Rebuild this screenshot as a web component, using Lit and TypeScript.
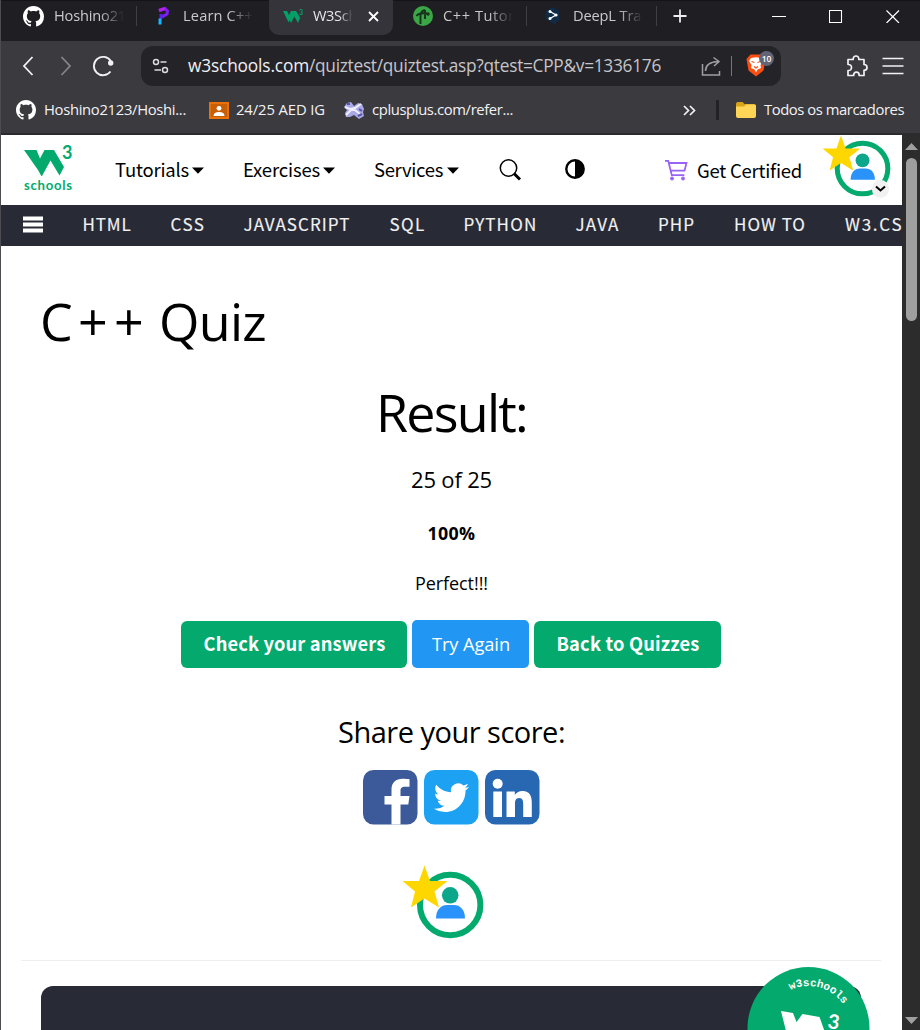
import { LitElement, html, css } from "lit";
import { customElement, property } from "lit/decorators.js";

/** A single line of text tracked so that it fills exactly `w` pixels. */
@customElement("fit-text")
class FitText extends LitElement {
  @property({ type: Number }) w = 0;
  @property() text = "";
  static styles = css`
    :host { display: inline-block; white-space: pre; flex: none; text-align: left; }
    .inner { display: inline-block; }
  `;
  firstUpdated() {
    const el = this.renderRoot.querySelector(".inner") as HTMLElement;
    const natural = el.getBoundingClientRect().width;
    const base = parseFloat(getComputedStyle(el).letterSpacing) || 0;
    el.style.letterSpacing = `${base + (this.w - natural) / Math.max(1, this.text.length)}px`;
    this.style.width = `${this.w}px`;
  }
  render() {
    return html`<span class="inner">${this.text}</span>`;
  }
}

const github = (s: number) => html`<svg width=${s} height=${s} viewBox="0 0 16 16" fill="#fff"><path d="M8 0C3.58 0 0 3.58 0 8c0 3.54 2.29 6.53 5.47 7.59.4.07.55-.17.55-.38 0-.19-.01-.82-.01-1.49-2.01.37-2.53-.49-2.69-.94-.09-.23-.48-.94-.82-1.13-.28-.15-.68-.52-.01-.53.63-.01 1.08.58 1.23.82.72 1.21 1.87.87 2.33.66.07-.52.28-.87.51-1.07-1.78-.2-3.64-.89-3.64-3.95 0-.87.31-1.59.82-2.15-.08-.2-.36-1.02.08-2.12 0 0 .67-.21 2.2.82.64-.18 1.32-.27 2-.27s1.36.09 2 .27c1.53-1.04 2.2-.82 2.2-.82.44 1.1.16 1.92.08 2.12.51.56.82 1.27.82 2.15 0 3.07-1.87 3.75-3.65 3.95.29.25.54.73.54 1.48 0 1.07-.01 1.93-.01 2.2 0 .21.15.46.55.38A8.01 8.01 0 0 0 16 8c0-4.42-3.58-8-8-8z"/></svg>`;

const programiz = html`<svg width="20" height="20" viewBox="0 0 20 20" fill="none" stroke-width="3"><path d="M6 4.5l6-2 2.500 2.500-.5 3-5 3" stroke="#7a1df2"/><path d="M6 4.500l6-2" stroke="#b620e8"/><path d="M8 8v5" stroke="#5a24e8"/><path d="M7 18.500v-6" stroke="#19b5fe"/></svg>`;

const w3fav = html`<svg width="21" height="20" viewBox="0 0 21 20"><path d="M0 5h4l2 4 2-4h5l4.200 6.800-2.200 5.200-3.600-6.500L8 17l-1.500-3-.8 2.500z" fill="#04a067"/><text x="16" y="8.500" font-size="7" font-family="Lato" font-weight="700" fill="#04a067">3</text></svg>`;

const tutorial = html`<svg width="20" height="20" viewBox="0 0 20 20"><circle cx="10" cy="10" r="10" fill="#3aa646"/><path d="M7.500 18V9Q8 5 12 4M3.500 10Q6 6.500 14 7.500M12 4v9" fill="none" stroke="#17331b" stroke-width="1.900"/><circle cx="15" cy="8" r="1.700" fill="#17331b"/></svg>`;

const deepl = html`<svg width="20" height="20" viewBox="0 0 20 20"><path d="M9.500 1l7 4v9l-3.500 2v3l-3.500-2-6.800-4V5z" fill="#0f2b46"/><path d="M7 5.500l6 3.500-6 3.500" stroke="#fff" stroke-width="1.300" fill="none"/><g fill="#fff"><circle cx="7" cy="5.600" r="1.500"/><circle cx="13" cy="9" r="1.600"/><circle cx="7" cy="12.500" r="1.500"/></g></svg>`;

const userBadge = (w: number, h: number) => html`<svg width=${w} height=${h} viewBox="-1 0 82 74">
  <circle cx="47.200" cy="40" r="30.200" fill="none" stroke="#04aa6d" stroke-width="6"/>
  <circle cx="47.200" cy="30.300" r="8.300" fill="#0da68a"/>
  <path d="M33 53.500c0-9 5-13.500 11-13.500h7c6 0 11 4.500 11 13.500z" fill="#2a93fb"/>
  <path d="M21.500.500l5.500 15.500h17.500l-13 10.500 4.500 16-14.500-9-13.500 9 4-16L-.5 16H16z" fill="#ffd700"/>
</svg>`;

const caret = html`<svg class="caret" width="12" height="7" viewBox="0 0 12 7"><path d="M0 .5h12L6 6.800z" fill="#000"/></svg>`;

@customElement("app-root")
class AppRoot extends LitElement {
  static styles = css`
    * { box-sizing: border-box; }
    :host { display: block; width: 920px; height: 1030px; overflow: hidden; background: #fff; font-family: "Open Sans", "Noto Sans", sans-serif; color: #000; }
    svg { display: block; flex: none; }
    .window { height: 1030px; border-left: 1px solid #4d4c50; display: flex; flex-direction: column; }
    .strip { height: 41px; flex: none; background: #1f1e23; display: flex; padding-left: 8px; border-top: 1px solid #141317; }
    .tab { width: 124px; height: 35px; flex: none; margin-top: -1px; padding: 6px 0 0 14px; display: flex; align-items: flex-start; color: #cac9cd; font-size: 14.600px; line-height: 19px; border-radius: 0 0 10px 10px; }
    .tab.active { background: #35343a; color: #e6e6ea; }
    .fade { margin-left: 10px; width: 70px; overflow: hidden; -webkit-mask-image: linear-gradient(90deg, #000 65%, transparent); mask-image: linear-gradient(90deg, #000 65%, transparent); }
    .active .fade { width: 40px; margin-left: 9px; }
    .x { margin: 5px 0 0 15px; }
    .sep { width: 1px; height: 20px; margin: 5px 2px 0 3px; background: #403f45; }
    .sep.none { background: transparent; }
    .plus { margin: 8px 0 0 14px; }
    .wins { display: flex; margin-left: auto; gap: 43px; padding: 8px 20px 0 0; }
    .toolbar { height: 50px; flex: none; background: #3b3a3f; display: flex; align-items: center; padding: 0 14px 0 21px; }
    .toolbar .fwd { margin-left: 26px; }
    .toolbar .reload { margin-left: 20px; }
    .omni { margin-left: 27px; width: 640px; height: 40px; border-radius: 12px; background: #242328; display: flex; align-items: center; padding-left: 11px; }
    .url { font-size: 17.300px; line-height: 30px; margin-left: 18px; color: #c6c5ca; display: flex; }
    .url .host { color: #f0f0f4; }
    .share { margin-left: 40px; }
    .bar { width: 1px; height: 20px; background: #77767b; margin: 0 14px 0 10px; }
    .shield { position: relative; width: 30px; height: 26px; }
    .count { position: absolute; left: 13px; top: -2px; width: 15px; height: 15px; border-radius: 8px; background: #626375; color: #fff; font-size: 8.500px; font-weight: 600; line-height: 15px; text-align: center; }
    .puzzle { margin-left: 65px; }
    .menu { margin-left: 14px; }
    .marks { height: 44px; flex: none; background: #3b3a3f; border-bottom: 2px solid #2b2a2f; display: flex; align-items: center; padding: 0 0 4px 15px; color: #f2f2f5; font-size: 14.800px; line-height: 24px; }
    .marks fit-text { margin-top: -2px; }
    .marks .t { margin-left: 8px; }
    .marks .all { margin-left: 7px; }
    .view { flex: 1; min-height: 0; display: flex; }
    .page { width: 901px; height: 895px; background: #fff; overflow: hidden; position: relative; }
    .nav { height: 70px; display: flex; align-items: center; font: 18.500px/30px "Noto Sans CJK SC", sans-serif; }
    .nav fit-text { margin-top: -2px; }
    .caret { margin-left: 4px; }
    .user { position: relative; margin: -8px 0 0 20px; }
    .dd { position: absolute; left: 50px; top: 45px; }
    .subnav { height: 41px; background: #282a35; display: flex; align-items: center; padding: 0 0 3px 22px; color: #f1f1f1; font: 17px/26px "Noto Sans CJK SC", sans-serif; -webkit-text-stroke: .15px #f1f1f1; white-space: nowrap; }
    .content { display: flex; flex-direction: column; align-items: center; padding: 40px 22px 0 20px; height: 784px; width: 901px; }
    .content > fit-text { padding-left: 1px; }
    .h1 { align-self: flex-start; display: flex; margin-left: 19px; height: 70px; flex: none; font-size: 52px; line-height: 70px; }
    .quiz { margin-left: 9px; }
    .result { margin-top: 18px; height: 76px; line-height: 76px; font-size: 52px; }
    .score { margin-top: 14px; height: 31px; line-height: 31px; font-size: 22px; }
    .pct { margin-top: 23px; height: 30px; line-height: 30px; font-size: 17.800px; font-weight: 700; }
    .perfect { margin-top: 20px; height: 30px; line-height: 30px; font-size: 18px; }
    .btns { margin-top: 22px; display: flex; gap: 5px; align-items: flex-end; height: 48px; flex: none; color: #fff; }
    .btn { height: 47px; border-radius: 6px; background: #04aa6d; display: flex; justify-content: center; padding-left: 2px; font: 700 18.300px/45px "Noto Sans CJK SC", sans-serif; }
    .check { width: 226px; }
    .again { width: 117px; height: 48px; border-radius: 5px; background: #2196f3; font: 18.300px/48px "Open Sans", sans-serif; }
    .back { width: 187px; }
    .sharelbl { margin-top: 44px; height: 40px; line-height: 40px; font-size: 29px; }
    .social { margin-top: 18px; display: flex; gap: 6px; height: 55px; flex: none; padding-left: 1px; }
    .badge { margin-top: 40px; height: 73px; padding-right: 16px; }
    .hr { margin-top: 22px; height: 1px; background: #eee; width: 860px; flex: none; }
    .panel { margin-top: 25px; flex: 1; width: 820px; background: #282a35; border-radius: 12px 12px 0 0; }
    .seal { position: absolute; left: 746px; top: 832px; }
    .scroll { width: 18px; height: 895px; background: #2c2c2c; display: flex; flex-direction: column; align-items: center; padding-top: 8px; }
    .thumb { width: 11px; height: 163px; margin: 8px 0 696px; border-radius: 6px; background: #9f9f9f; flex: none; }
  `;

  private tabs = [
    { icon: github(21), text: "Hoshino21", w: 72, sep: true },
    { icon: programiz, text: "Learn C++", w: 70, sep: false },
    { icon: w3fav, text: "W3Sch", w: 44, active: true, sep: false },
    { icon: tutorial, text: "C++ Tutori", w: 76, sep: true },
    { icon: deepl, text: "DeepL Tran", w: 77, sep: true },
  ];

  private topics: [string, number, number][] = [
    ["HTML", 49, 39.5], ["CSS", 35, 39], ["JAVASCRIPT", 107, 38], ["SQL", 36, 39], ["PYTHON", 74, 38],
    ["JAVA", 44, 38], ["PHP", 37, 38.5], ["HOW TO", 72, 39], ["W3.CSS", 70, 39],
  ];

  render() {
    return html`<div class="window">
      <div class="strip">
        ${this.tabs.map((t) => html`<div class="tab ${t.active ? "active" : ""}">${t.icon}<div class="fade"><fit-text .w=${t.w} .text=${t.text}></fit-text></div>
          ${t.active ? html`<svg class="x" width="11" height="11" viewBox="0 0 11 11"><path d="M1 1l9 9M10 1l-9 9" stroke="#fff" stroke-width="1.800"/></svg>` : ""}</div>
          <div class="sep ${t.sep ? "" : "none"}"></div>`)}
        <svg class="plus" width="14" height="14" viewBox="0 0 14 14"><path d="M7 .5v13M.5 7h13" stroke="#eee" stroke-width="1.800"/></svg>
        <div class="wins">
          <svg width="14" height="14" viewBox="0 0 14 14"><path d="M0 7.500h14" stroke="#fff"/></svg>
          <svg width="14" height="14" viewBox="0 0 14 14"><path d="M.5 1.500h12v12h-12z" fill="none" stroke="#fff" stroke-width="1.100"/></svg>
          <svg width="14" height="14" viewBox="0 0 14 14"><path d="M.5 1.500l12.500 12.500M13 1.500L.5 14" stroke="#fff" stroke-width="1.200"/></svg>
        </div>
      </div>
      <div class="toolbar">
        <svg width="12" height="20" viewBox="0 0 12 20"><path d="M10.500 1L2 10l8.500 9" fill="none" stroke="#f2f2f4" stroke-width="1.800"/></svg>
        <svg class="fwd" width="12" height="20" viewBox="0 0 12 20"><path d="M1.500 1L10 10l-8.500 9" fill="none" stroke="#86858a" stroke-width="1.800"/></svg>
        <svg class="reload" width="22" height="22" viewBox="0 0 22 22"><path d="M18.800 6A9.200 9.200 0 1 0 18.500 16.500" fill="none" stroke="#f2f2f4" stroke-width="1.800"/><circle cx="18.700" cy="8" r="2.700" fill="#f2f2f4"/></svg>
        <div class="omni">
          <svg width="18" height="16" viewBox="0 0 18 16" fill="none" stroke="#dcdbe0" stroke-width="1.500"><circle cx="4" cy="4" r="2.500"/><path d="M8.500 4h6"/><circle cx="13" cy="12" r="2.500"/><path d="M2.500 12H9"/></svg>
          <div class="url"><fit-text class="host" .w=${121} .text=${"w3schools.com"}></fit-text><fit-text .w=${352} .text=${"/quiztest/quiztest.asp?qtest=CPP&v=1336176"}></fit-text></div>
          <svg class="share" width="20" height="20" viewBox="0 0 20 20" fill="none" stroke="#9f9ea3" stroke-width="1.500"><path d="M1.500 8v11h17v-4"/><path d="M4.500 15c0-6 4-9 12.500-9.500M12.500 1.500l5.500 4-5 4.500"/></svg>
          <div class="bar"></div>
          <div class="shield">
            <svg width="20" height="24" viewBox="0 0 20 24"><path d="M4.500 1.500h11L19.500 6l-2 11.500L10 23.500l-7.500-6L.5 6z" fill="#fb4e12"/><path d="M5 5l5-.7 5 .7 2 3-2.500 4 .5 3-3.500 1.500L10 19.500l-1.500-3L5 15l.5-3L3 8z" fill="#fff"/><path d="M5.500 8.500l3 1M14.500 8.500l-3 1M8 13.500l2 1.500 2-1.500" stroke="#fb4e12" stroke-width="1.200" fill="none"/></svg>
            <div class="count">10</div>
          </div>
        </div>
        <svg class="puzzle" width="22" height="22" viewBox="0 0 22 22"><path d="M2 4.500h5.200C6.800 2.500 8.300 1 10 1s3.200 1.500 2.800 3.500H18v5c2 0 3 1.300 3 2.900s-1 2.900-3 2.900V20.500h-4.800c0-2-1-3.300-2.800-3.300s-2.800 1.300-2.800 3.300H2v-5c2.500.2 3.500-1.200 3.500-3S4.500 9.300 2 9.500z" fill="none" stroke="#f2f2f4" stroke-width="1.700" stroke-linejoin="round"/></svg>
        <svg class="menu" width="22" height="18" viewBox="0 0 22 18"><path d="M.5 1.500h21M.5 9h21M.5 16.500h21" stroke="#f2f2f4" stroke-width="1.700"/></svg>
      </div>
      <div class="marks">
        ${github(20)}<fit-text class="t" .w=${142} .text=${"Hoshino2123/Hoshi..."}></fit-text>
        <svg style="margin-left:23px" width="20" height="17" viewBox="0 0 20 17"><path d="M0 0h20v17H0z" fill="#e8710a"/><path d="M2 2h16v13H2z" fill="#c75f08"/><circle cx="10" cy="6.300" r="2.400" fill="#fff"/><path d="M4.500 14q0-4 5.500-4t5.500 4z" fill="#fff"/></svg>
        <fit-text style="margin-left:7px" .w=${89} .text=${"24/25 AED IG"}></fit-text>
        <svg style="margin-left:19px" width="21" height="17" viewBox="0 0 21 17"><path d="M3 1l4-1 3 4 4-3 4 1 2 5-1 3 1 4-5 3-5-4-4 2H2l-1-4 2-3-3-3z" fill="#a9a8e6"/><path d="M1 5l5 2 5-1 6-4M2 13l5-5 4 0 6 5" stroke="#eeeefe" stroke-width="2" fill="none"/><path d="M3 2h3M14 14l4-2M15 7l3 2" stroke="#5755a9" stroke-width="2"/></svg>
        <fit-text style="margin-left:7px" .w=${141} .text=${"cplusplus.com/refer..."}></fit-text>
        <svg style="margin-left:170px" width="13" height="11" viewBox="0 0 13 11"><path d="M1 1l4.500 4.500L1 10M7 1l4.500 4.500L7 10" fill="none" stroke="#f2f2f5" stroke-width="1.700"/></svg>
        <svg style="margin-left:20px" width="3" height="20"><rect width="3" height="20" rx="1" fill="#222126"/></svg>
        <svg style="margin-left:17px" width="20" height="16" viewBox="0 0 20 16"><path d="M0 2Q0 0 2 0h4.500l2 2H18q2 0 2 2v9H0z" fill="#d9a315"/><path d="M0 4.500h8L10.500 2.500H18q2 0 2 1.500v10q0 2-2 2H2q-2 0-2-2z" fill="#ffd558"/></svg>
        <fit-text class="t" .w=${140} .text=${"Todos os marcadores"}></fit-text>
      </div>
      <div class="view">
        <div class="page">
          <div class="nav">
            <svg style="margin:-2px 0 0 22px" width="52" height="50" viewBox="0 0 52 50" fill="#04aa6d"><path d="M1 6h12.500l3.500 8.500L21.500 6h9.500l10 17-4.500 8.500-9-15-8.500 15.500h-.7L15 26z"/><text x="39" y="14.500" font-family="Lato" font-weight="700" font-size="18" textLength="10">3</text><text x="1" y="46" font-family="Lato" font-weight="700" font-size="13.200" textLength="48">schools</text></svg>
            <fit-text style="margin-left:40px" .w=${74} .text=${"Tutorials"}></fit-text><span style="margin-left:-1px">${caret}</span>
            <fit-text style="margin-left:39px" .w=${77} .text=${"Exercises"}></fit-text><span style="margin-left:-1px">${caret}</span>
            <fit-text style="margin-left:39px" .w=${69} .text=${"Services"}></fit-text><span>${caret}</span>
            <svg style="margin-left:39px" width="24" height="24" viewBox="0 0 24 24" fill="none" stroke="#000"><circle cx="10.500" cy="10" r="8.200" stroke-width="1.500"/><path d="M16 15.500l6 6" stroke-width="3"/></svg>
            <svg style="margin:-2px 0 0 43px" width="20" height="20" viewBox="0 0 20 20"><circle cx="10" cy="10" r="8.700" fill="none" stroke="#000" stroke-width="2.400"/><path d="M10 1a9 9 0 0 1 0 18z"/></svg>
            <svg style="margin-left:80px" width="23" height="22" viewBox="0 0 23 22" fill="none" stroke="#9663f5" stroke-width="1.800"><path d="M0 1.800h3.200l3.600 14.400h12.500M4 4h17.500l-2 7.700H6.200"/><circle cx="7" cy="19.500" r="1.500" fill="#9663f5" stroke-width="1"/><circle cx="18" cy="19.500" r="1.500" fill="#9663f5" stroke-width="1"/></svg>
            <fit-text style="margin:0 0 0 9px" .w=${105} .text=${"Get Certified"}></fit-text>
            <div class="user">${userBadge(69, 62)}<svg class="dd" width="17" height="18" viewBox="0 0 17 18"><rect width="17" height="18" rx="8.500" fill="#f1f1f1"/><path d="M4 6.500l4.500 4 4.500-4" fill="none" stroke="#000" stroke-width="2"/></svg></div>
          </div>
          <div class="subnav">
            <svg width="20" height="17" viewBox="0 0 20 17" fill="#fff"><path d="M0 .5h20v4H0zM0 6.500h20v4H0zM0 12.500h20v4H0z"/></svg>
            ${this.topics.map(([t, w, m]) => html`<fit-text style="margin-left:${m}px" .w=${w} .text=${t}></fit-text>`)}
          </div>
          <div class="content">
            <div class="h1"><fit-text .w=${38} .text=${"C"}></fit-text><fit-text .w=${72} .text=${"++"}></fit-text><fit-text class="quiz" .w=${107} .text=${"Quiz"}></fit-text></div>
            <fit-text class="result" .w=${151} .text=${"Result:"}></fit-text>
            <fit-text class="score" .w=${81} .text=${"25 of 25"}></fit-text>
            <fit-text class="pct" .w=${48} .text=${"100%"}></fit-text>
            <fit-text class="perfect" .w=${73} .text=${"Perfect!!!"}></fit-text>
            <div class="btns">
              <div class="btn check"><fit-text .w=${182} .text=${"Check your answers"}></fit-text></div>
              <div class="btn again"><fit-text .w=${78} .text=${"Try Again"}></fit-text></div>
              <div class="btn back"><fit-text .w=${143} .text=${"Back to Quizzes"}></fit-text></div>
            </div>
            <fit-text class="sharelbl" .w=${227} .text=${"Share your score:"}></fit-text>
            <div class="social">
              <svg width="55" height="55" viewBox="0 0 55 55"><rect width="54.500" height="54.500" rx="10.500" fill="#3c5a99"/><path d="M28.500 54.500V34.500h-7V26h7v-6.500C28.500 12.500 33 8.800 39.500 8.800c3 0 5.500.2 7 .4v7.600h-4.500c-3.600 0-4.500 1.700-4.500 4.200v5h9l-1.200 8.500h-7.800V54.500z" fill="#fff"/></svg>
              <svg width="55" height="55" viewBox="0 0 55 55"><rect width="54.500" height="54.500" rx="10.500" fill="#1da1f2"/><path transform="translate(9.800 10) scale(1.470)" d="M23.953 4.570a10 10 0 0 1-2.825.775 4.958 4.958 0 0 0 2.163-2.723c-.951.555-2.005.959-3.127 1.184a4.920 4.920 0 0 0-8.384 4.482C7.690 8.095 4.067 6.130 1.640 3.162a4.822 4.822 0 0 0-.666 2.475c0 1.710.870 3.213 2.188 4.096a4.904 4.904 0 0 1-2.228-.616v.060a4.923 4.923 0 0 0 3.946 4.827 4.996 4.996 0 0 1-2.212.085 4.936 4.936 0 0 0 4.604 3.417 9.867 9.867 0 0 1-6.102 2.105c-.390 0-.779-.023-1.170-.067a13.995 13.995 0 0 0 7.557 2.209c9.053 0 13.998-7.496 13.998-13.985 0-.210 0-.420-.015-.630A9.935 9.935 0 0 0 24 4.590z" fill="#fff"/></svg>
              <svg width="55" height="55" viewBox="0 0 55 55"><rect width="54.500" height="54.500" rx="10.500" fill="#2867b2"/><circle cx="12.700" cy="13.800" r="5" fill="#fff"/><path d="M8.300 21.500h8.700v25.500H8.300zM21.500 21.500h8.300V25c1.300-2.300 4-4 7.700-4 7.500 0 9.300 5 9.300 12v14h-8.600V34.500c0-3.500-.3-6.500-4-6.500s-4.200 3-4.200 6.300V47h-8.500z" fill="#fff"/></svg>
            </div>
            <div class="badge">${userBadge(82, 74)}</div>
            <div class="hr"></div>
            <div class="panel"></div>
          </div>
          <svg class="seal" width="124" height="64" viewBox="0 0 124 64"><circle cx="61.500" cy="61" r="61" fill="#04aa6d"/><defs><path id="arc" d="M19.500 61A42 42 0 0 1 103.500 61" transform="rotate(18 61.500 61)"/></defs>
            <text font-family="Liberation Mono" font-weight="700" font-size="11" fill="#fff"><textPath href="#arc" startOffset="34">w3schools</textPath></text>
            <path d="M34 44l12 2 3.500 9 6-8 17 3 5 14H39z" fill="#fff"/><text x="80" y="61" font-family="Lato" font-weight="700" font-size="20" fill="#fff" transform="rotate(8 80 61)">3</text></svg>
        </div>
        <div class="scroll">
          <svg width="13" height="7" viewBox="0 0 13 7"><path d="M0 7L6.500 0 13 7z" fill="#9f9f9f"/></svg>
          <div class="thumb"></div>
          <svg width="13" height="7" viewBox="0 0 13 7"><path d="M0 0l6.500 7L13 0z" fill="#9f9f9f"/></svg>
        </div>
      </div>
    </div>`;
  }
}
